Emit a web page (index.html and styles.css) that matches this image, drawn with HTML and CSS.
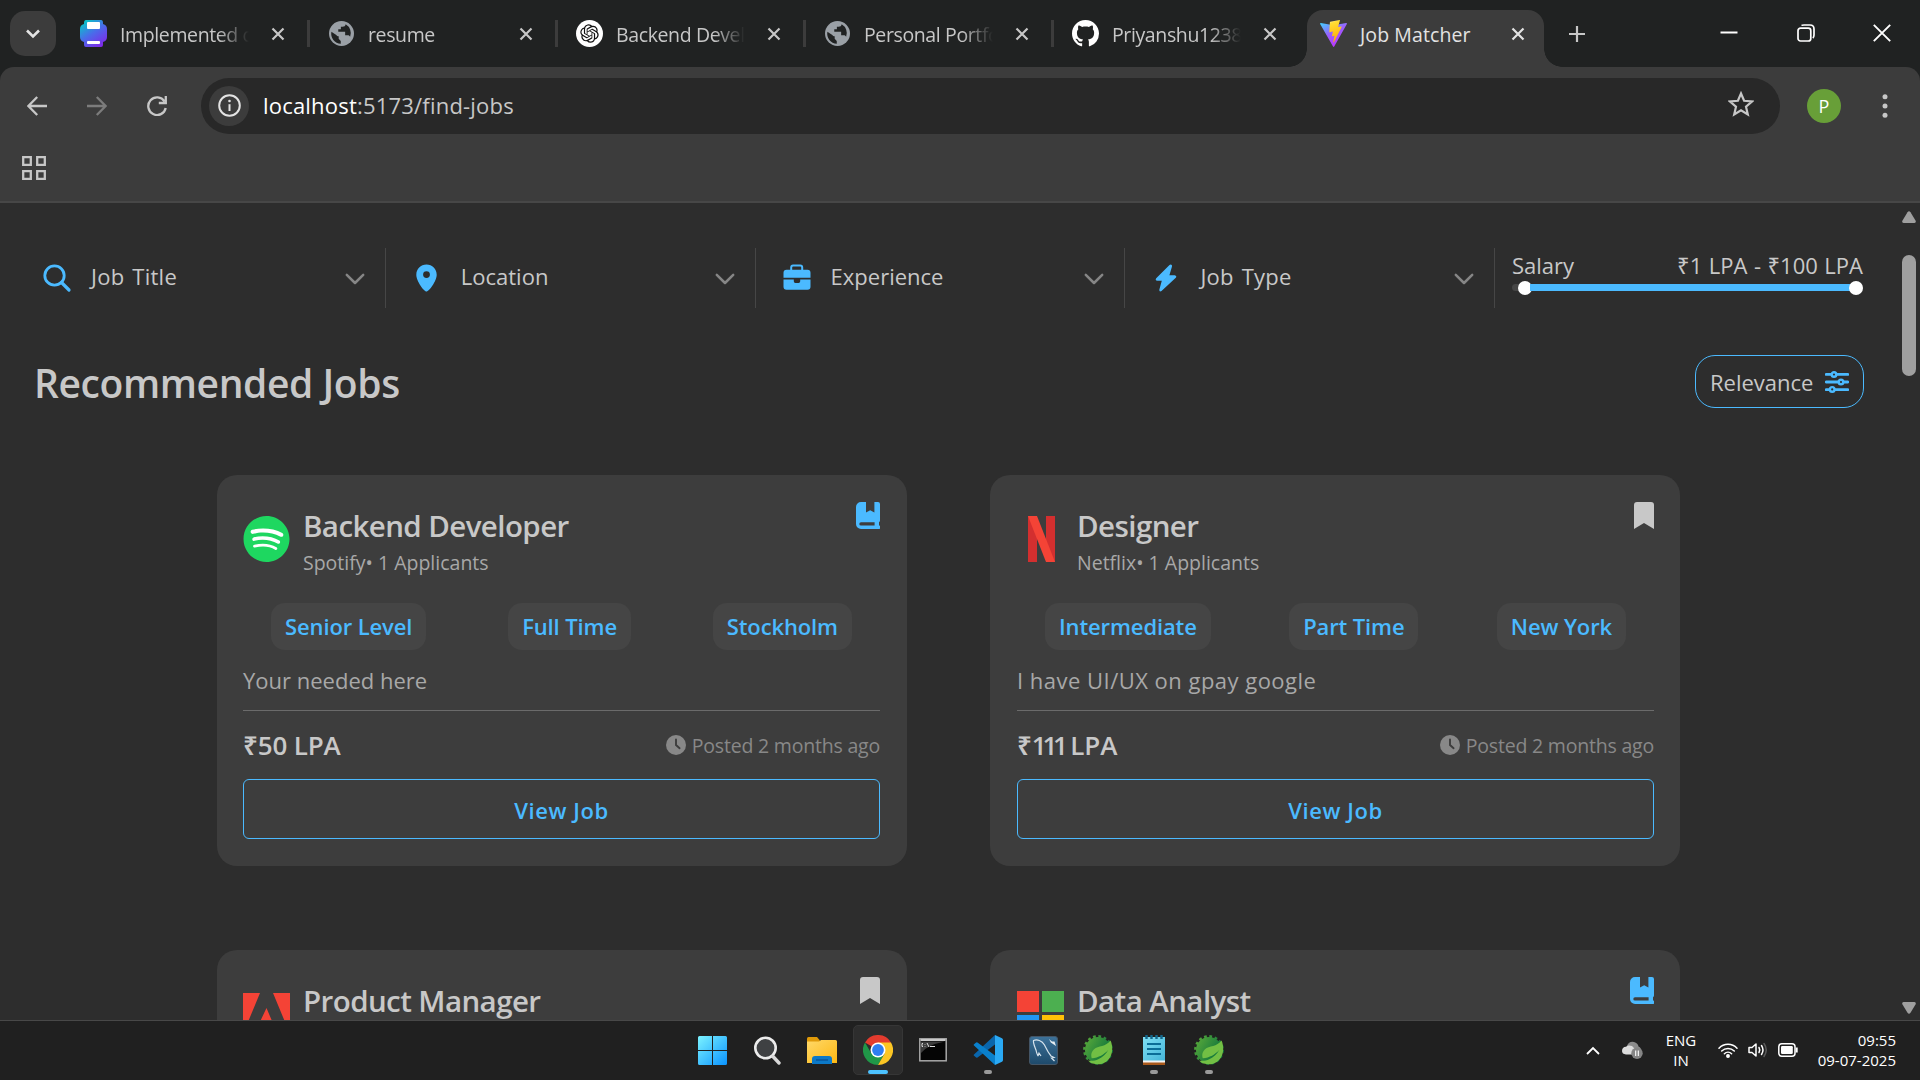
FILE: index.html
```html
<!DOCTYPE html>
<html lang="en">
<head>
<meta charset="utf-8">
<title>Job Matcher</title>
<link rel="stylesheet" href="styles.css">
</head>
<body>
<svg class="defs" width="0" height="0">
  <defs>
    <linearGradient id="g-vite" x1="0" y1="0" x2=".6" y2="1"><stop offset="0" stop-color="#41d1ff"/><stop offset=".5" stop-color="#9a60fe"/><stop offset="1" stop-color="#bd34fe"/></linearGradient>
    <linearGradient id="g-bolt" x1=".4" y1="0" x2=".6" y2="1"><stop offset="0" stop-color="#ffea83"/><stop offset=".1" stop-color="#ffdd35"/><stop offset="1" stop-color="#ffa800"/></linearGradient>
    <linearGradient id="g-bot" x1=".1" y1="0" x2=".8" y2="1"><stop offset="0" stop-color="#00d0c4"/><stop offset=".5" stop-color="#4a6bea"/><stop offset="1" stop-color="#8226e8"/></linearGradient>
    <linearGradient id="g-win" gradientUnits="userSpaceOnUse" x1="0" y1="0" x2="29" y2="29"><stop offset="0" stop-color="#7cf3ff"/><stop offset="1" stop-color="#0a93ff"/></linearGradient>
    <linearGradient id="g-folder" x1="0" y1="0" x2="1" y2="1"><stop offset="0" stop-color="#ffd868"/><stop offset="1" stop-color="#fdb813"/></linearGradient>
    <linearGradient id="g-gear" x1="0" y1="0" x2="1" y2=".6"><stop offset="0" stop-color="#5cab3a"/><stop offset="1" stop-color="#08703c"/></linearGradient>
    <linearGradient id="g-sql" x1="0" y1="0" x2="0" y2="1"><stop offset="0" stop-color="#3c7199"/><stop offset="1" stop-color="#1e4a6b"/></linearGradient>
    <linearGradient id="g-note" x1="0" y1="0" x2="1" y2="1"><stop offset="0" stop-color="#7fe0f5"/><stop offset="1" stop-color="#45b5d8"/></linearGradient>
    <symbol id="i-x" viewBox="0 0 14 14"><path d="M1.500 1.500l11 11M12.500 1.500l-11 11" fill="none" stroke="currentColor" stroke-width="2.200"/></symbol>
    <symbol id="i-globe" viewBox="0 0 24 24"><circle cx="12" cy="12" r="12" fill="#9aa0a6"/><path d="M2.300 10.300L7 13.500c.5.800 1.300 1.200 2.300 1.200v2.400l2 2v2.800A9.800 9.800 0 0 1 2.300 10.300zM16 3.200c-.2 1.600-1.300 2.400-3 2.400h-1.600v2.300H8.900v2.300h6.600v3.500h2.600c1 0 1.800.6 2.200 1.500A9.800 9.800 0 0 0 16 3.200z" fill="#202222"/></symbol>
    <symbol id="i-chev" viewBox="0 0 20 12"><path d="M1.800 1.800L10 10l8.200-8.200" fill="none" stroke="#868686" stroke-width="2.500" stroke-linecap="round" stroke-linejoin="round"/></symbol>
    <symbol id="i-mark" viewBox="0 0 20 27"><path d="M3 0h14a3 3 0 0 1 3 3v24l-10-6L0 27V3a3 3 0 0 1 3-3z" fill="#c8c8c8"/></symbol>
    <symbol id="i-book" viewBox="0 0 24 27"><path d="M5 0h5v10.500l4.200-2.300 4.200 2.300V0h3.600a2 2 0 0 1 2 2v16.500a2 2 0 0 1-1 1.700v3.400h.2a1.700 1.700 0 0 1 0 3.400H5a5 5 0 0 1-5-5V5a5 5 0 0 1 5-5zM5 20.200a1.700 1.700 0 0 0 0 3.400h13.600v-3.400z" fill="#4bbaff" fill-rule="evenodd"/></symbol>
    <symbol id="i-clock" viewBox="0 0 20 20"><circle cx="10" cy="10" r="10" fill="#888"/><path d="M10 4.500V10l3.600 3.200" fill="none" stroke="#3d3d3d" stroke-width="1.900" stroke-linecap="round"/></symbol>
    <symbol id="i-spring" viewBox="0 0 30 30"><circle cx="15" cy="15" r="13" fill="url(#g-gear)"/><circle cx="15" cy="15" r="13.600" fill="none" stroke="url(#g-gear)" stroke-width="2.600" stroke-dasharray="2.700 2.640"/><path d="M27.500 5.500c2.300 5 2.600 12-.8 17.500-4 6-11 7.500-17 5.500-2-.7-3.500-1.700-4.500-3 3.500.6 7 .1 10-1.300 4.500-2 8-5.200 10-9.200-4 4.500-9.500 7.800-16.500 8.200-1-3-.5-6.500 2.300-9C15 10.500 23 12 27.500 5.500z" fill="#72bf44"/></symbol>
  </defs>
</svg>

<header class="tabstrip">
  <button class="tab-search"><svg width="16" height="12" viewBox="0 0 16 12"><path d="M2 2.500l6 6 6-6" fill="none" stroke="#e3e3e3" stroke-width="2.600"/></svg></button>
  <div class="tab"><svg class="fav" viewBox="0 0 27 27"><path d="M6 0h15q2 0 2 3v1q4 1 4 5v8q0 4-4 5v3q0 2-2 2H6q-2 0-2-2v-3q-4-1-4-5V9q0-4 4-5V3q0-3 2-3z" fill="url(#g-bot)"/><rect x="7" y="2" width="13" height="7" rx="1" fill="#fff"/><rect x="7" y="21" width="13" height="3" rx="1" fill="#fff"/></svg><span class="tab-title">Implemented c</span><svg class="x"><use href="#i-x"/></svg></div>
  <div class="tab"><svg class="fav globe"><use href="#i-globe"/></svg><span class="tab-title">resume</span><svg class="x"><use href="#i-x"/></svg></div>
  <div class="tab"><svg class="fav" viewBox="0 0 27 27"><circle cx="13.500" cy="13.500" r="13.500" fill="#fff"/><path transform="translate(4.300 4.300) scale(.767)" fill="#111" d="M22.282 9.821a5.985 5.985 0 0 0-.516-4.910 6.046 6.046 0 0 0-6.510-2.900A6.065 6.065 0 0 0 4.981 4.182a5.985 5.985 0 0 0-3.998 2.900 6.046 6.046 0 0 0 .743 7.097 5.980 5.980 0 0 0 .511 4.911 6.051 6.051 0 0 0 6.515 2.900A5.985 5.985 0 0 0 13.260 24a6.056 6.056 0 0 0 5.772-4.206 5.989 5.989 0 0 0 3.998-2.900 6.056 6.056 0 0 0-.748-7.073zm-9.022 12.608a4.476 4.476 0 0 1-2.876-1.041l.142-.080 4.778-2.758a.795.795 0 0 0 .393-.681v-6.737l2.020 1.169a.071.071 0 0 1 .038.052v5.583a4.504 4.504 0 0 1-4.495 4.494zm-9.661-4.125a4.471 4.471 0 0 1-.535-3.014l.142.085 4.783 2.758a.771.771 0 0 0 .781 0l5.843-3.369v2.332a.080.080 0 0 1-.033.062L9.740 19.950a4.499 4.499 0 0 1-6.141-1.646zM2.341 7.896a4.485 4.485 0 0 1 2.366-1.973V11.600a.766.766 0 0 0 .388.677l5.814 3.354-2.020 1.169a.076.076 0 0 1-.071 0l-4.830-2.787A4.504 4.504 0 0 1 2.341 7.872zm16.596 3.856L13.104 8.364 15.119 7.200a.076.076 0 0 1 .071 0l4.830 2.791a4.494 4.494 0 0 1-.677 8.104v-5.677a.790.790 0 0 0-.407-.667zm2.011-3.023l-.142-.085-4.774-2.782a.776.776 0 0 0-.785 0L9.409 9.230V6.897a.066.066 0 0 1 .028-.062l4.830-2.787a4.499 4.499 0 0 1 6.680 4.660zM8.307 12.863l-2.020-1.164a.080.080 0 0 1-.038-.057V6.074a4.499 4.499 0 0 1 7.376-3.454l-.142.081L8.704 5.459a.795.795 0 0 0-.393.681zm1.098-2.365l2.602-1.500 2.607 1.500v2.999l-2.597 1.500-2.607-1.500Z"/></svg><span class="tab-title">Backend Devel</span><svg class="x"><use href="#i-x"/></svg></div>
  <div class="tab"><svg class="fav globe"><use href="#i-globe"/></svg><span class="tab-title">Personal Portfo</span><svg class="x"><use href="#i-x"/></svg></div>
  <div class="tab last"><svg class="fav" viewBox="0 0 16 16"><path fill="#fff" d="M8 0C3.580 0 0 3.580 0 8c0 3.540 2.290 6.530 5.470 7.590.4.070.55-.17.55-.38 0-.19-.01-.82-.01-1.490-2.010.37-2.530-.49-2.690-.94-.09-.23-.48-.94-.82-1.130-.28-.15-.68-.52-.01-.53.63-.01 1.080.58 1.230.82.72 1.210 1.870.87 2.330.66.07-.52.28-.87.51-1.070-1.780-.2-3.640-.89-3.640-3.950 0-.87.31-1.590.82-2.150-.08-.2-.36-1.020.08-2.120 0 0 .67-.21 2.200.82.640-.18 1.320-.27 2-.27s1.360.09 2 .27c1.530-1.040 2.200-.82 2.200-.82.440 1.100.160 1.920.080 2.120.510.560.820 1.270.820 2.150 0 3.070-1.870 3.750-3.650 3.950.290.250.540.730.540 1.480 0 1.070-.01 1.930-.01 2.200 0 .210.150.460.550.380A8.010 8.010 0 0 0 16 8c0-4.420-3.580-8-8-8z"/></svg><span class="tab-title">Priyanshu1238</span><svg class="x"><use href="#i-x"/></svg></div>
  <div class="tab active"><svg class="fav" viewBox="0 0 256 257"><path fill="url(#g-vite)" d="M255.153 37.938L134.897 252.976c-2.483 4.440-8.862 4.466-11.382.048L.875 37.958c-2.746-4.814 1.371-10.646 6.827-9.670l120.385 21.517a6.537 6.537 0 0 0 2.322-.004l117.867-21.483c5.438-.991 9.574 4.796 6.877 9.620Z"/><path fill="url(#g-bolt)" d="M185.432.063L96.440 17.501a3.268 3.268 0 0 0-2.634 3.014l-5.474 92.456a3.268 3.268 0 0 0 3.997 3.378l24.777-5.718c2.318-.535 4.413 1.507 3.936 3.838l-7.361 36.047c-.495 2.426 1.782 4.500 4.151 3.780l15.304-4.649c2.372-.720 4.652 1.360 4.150 3.788l-11.698 56.621c-.732 3.542 3.979 5.473 5.943 2.437l1.313-2.028l72.516-144.720c1.215-2.423-.880-5.186-3.540-4.672l-25.505 4.922c-2.396.462-4.435-1.770-3.759-4.114l16.646-57.705c.677-2.350-1.370-4.583-3.769-4.113Z"/></svg><span class="tab-title">Job Matcher</span><svg class="x"><use href="#i-x"/></svg></div>
  <svg class="plus" width="18" height="18" viewBox="0 0 18 18"><path d="M9 1v16M1 9h16" stroke="#c7c7c7" stroke-width="2.200"/></svg>
  <div class="win">
    <svg width="18" height="18" viewBox="0 0 18 18"><path d="M.5 8.500h17" stroke="#fff" stroke-width="2"/></svg>
    <svg width="18" height="18" viewBox="0 0 18 18" fill="none" stroke="#fff" stroke-width="1.700"><rect x="1" y="4.200" width="12.800" height="12.800" rx="2.500"/><path d="M4.500 1.500Q5 1 7 1h6q4 0 4 4v6q0 2-1.200 3"/></svg>
    <svg width="18" height="18" viewBox="0 0 18 18"><path d="M.8.8l16.400 16.400M17.200.8L.8 17.200" stroke="#fff" stroke-width="1.900"/></svg>
  </div>
</header>

<div class="chrome">
  <div class="toolbar">
    <svg class="nav" viewBox="0 0 20 20"><path d="M20 10H2M10.200 1L1.400 10l8.800 9" fill="none" stroke="#c7c7c7" stroke-width="2.300"/></svg>
    <svg class="nav" viewBox="0 0 20 20"><path d="M0 10h18M9.800 1l8.800 9-8.800 9" fill="none" stroke="#7c7c7c" stroke-width="2.300"/></svg>
    <svg class="nav" viewBox="0 0 20 20"><path d="M17.500 5.500A8.800 8.800 0 1 0 18.700 12M18.800 0v7h-7" fill="none" stroke="#c7c7c7" stroke-width="2.300"/></svg>
    <div class="omnibox">
      <span class="info"><svg width="23" height="23" viewBox="0 0 23 23"><circle cx="11.500" cy="11.500" r="10.300" fill="none" stroke="#e3e3e3" stroke-width="2"/><path d="M11.500 10.200V17" stroke="#e3e3e3" stroke-width="2"/><circle cx="11.500" cy="7" r="1.300" fill="#e3e3e3"/></svg></span>
      <span class="url"><b>localhost</b>:5173/find-jobs</span>
      <svg class="star" width="26" height="26" viewBox="0 0 26 26"><path d="M13 2.500l3.100 7.300 7.900.7-6 5.200 1.800 7.700-6.800-4.100-6.800 4.100L8 15.700l-6-5.200 7.900-.7z" fill="none" stroke="#c7c7c7" stroke-width="2.200"/></svg>
    </div>
    <span class="avatar">P</span>
    <svg class="dots" width="6" height="24" viewBox="0 0 6 24" fill="#c7c7c7"><circle cx="3" cy="2.700" r="2.500"/><circle cx="3" cy="12" r="2.500"/><circle cx="3" cy="21.300" r="2.500"/></svg>
  </div>
  <div class="bookmarks"><svg width="24" height="24" viewBox="0 0 24 24" fill="none" stroke="#c7c7c7" stroke-width="2.300"><path d="M1.200 1.200h7.600v7.600H1.200zM15.200 1.200h7.600v7.600h-7.600zM1.200 15.200h7.600v7.600H1.200zM15.200 15.200h7.600v7.600h-7.600z"/></svg></div>
</div>

<div class="viewport">
  <main class="page">
    <section class="filters">
      <div class="filter"><svg width="30" height="30" viewBox="0 0 30 30"><circle cx="12.500" cy="12.500" r="9.700" fill="none" stroke="#4bbaff" stroke-width="2.800"/><path d="M19.500 19.500l7.500 7.500" stroke="#4bbaff" stroke-width="3.200" stroke-linecap="round"/></svg><span class="spaced">Job Title</span><svg class="chev"><use href="#i-chev"/></svg></div>
      <div class="filter"><svg width="30" height="30" viewBox="0 0 30 30"><path d="M14.500 1.500c5.800 0 10.200 4.500 10.200 10.200 0 6.300-7.700 16.800-10.200 16.800S4.300 18 4.300 11.700C4.300 6 8.700 1.500 14.500 1.500zm0 6.700a3.400 3.400 0 1 0 0 6.800 3.400 3.400 0 0 0 0-6.800z" fill="#4bbaff" fill-rule="evenodd"/></svg><span>Location</span><svg class="chev"><use href="#i-chev"/></svg></div>
      <div class="filter"><svg width="30" height="30" viewBox="0 0 30 30"><path d="M9.200 7V4.500q0-1.900 1.900-1.900h7.200q1.900 0 1.900 1.900V7" fill="none" stroke="#4bbaff" stroke-width="2"/><path d="M4.500 6.700h21q3 0 3 3v5h-27v-5q0-3 3-3zM1.500 16.500h10.300v1.800q0 1.600 1.600 1.600h3.200q1.600 0 1.600-1.600v-1.800h10.300v7.200q0 3-3 3h-21q-3 0-3-3z" fill="#4bbaff"/></svg><span>Experience</span><svg class="chev"><use href="#i-chev"/></svg></div>
      <div class="filter"><svg width="30" height="30" viewBox="0 0 30 30"><path d="M19.600 1.500q1.800.1 1.400 2l-2.600 8.700h5.300q2.500.6 1.100 2.600L10.500 28q-2.300 1.200-2.200-1.200l2.500-9H6.300q-2.500-.6-1.100-2.600L18.500 2q.5-.5 1.100-.5z" fill="#4bbaff"/></svg><span class="spaced">Job Type</span><svg class="chev"><use href="#i-chev"/></svg></div>
      <div class="salary">
        <div class="salary-text"><span>Salary</span><span class="range">₹1 LPA - ₹100 LPA</span></div>
        <div class="track"><span class="thumb"></span><span class="bar"></span><span class="thumb"></span></div>
      </div>
    </section>
    <section class="heading">
      <h1>Recommended Jobs</h1>
      <button class="sort"><span>Relevance</span><svg width="24" height="22" viewBox="0 0 24 22" fill="#2d2d2d" stroke="#4bbaff" stroke-width="2.400"><path d="M1.200 3.300h21.600M1.200 11h21.600M1.200 18.600h21.600" stroke-width="2.800" stroke-linecap="round"/><circle cx="9" cy="3.500" r="2.300"/><circle cx="16" cy="11" r="2.300"/><circle cx="7.200" cy="18.400" r="2.300"/></svg></button>
    </section>
    <section class="cards">
      <article class="card">
        <div class="card-head">
          <svg class="logo" viewBox="0 0 24 24"><circle cx="12" cy="12" r="11" fill="#fff"/><path fill="#1ed760" d="M12 0C5.400 0 0 5.400 0 12s5.400 12 12 12 12-5.400 12-12S18.660 0 12 0zm5.521 17.340c-.240.359-.660.480-1.021.240-2.820-1.740-6.360-2.101-10.561-1.141-.418.122-.779-.179-.899-.539-.120-.421.180-.780.540-.900 4.560-1.021 8.520-.600 11.640 1.320.420.180.479.659.301 1.020zm1.440-3.300c-.301.420-.841.600-1.262.300-3.239-1.980-8.159-2.580-11.939-1.380-.479.120-1.020-.120-1.140-.600-.120-.480.120-1.021.600-1.141C9.600 9.900 15 10.561 18.720 12.840c.361.181.540.780.241 1.200zm.120-3.360C15.240 8.400 8.820 8.160 5.160 9.301c-.600.179-1.200-.181-1.380-.721-.180-.601.180-1.200.720-1.381 4.260-1.260 11.280-1.020 15.721 1.621.539.300.719 1.020.419 1.560-.299.421-1.020.599-1.559.300z"/></svg>
          <div class="who"><h2>Backend Developer</h2><p>Spotify• 1 Applicants</p></div>
          <svg class="book"><use href="#i-book"/></svg>
        </div>
        <div class="tags"><span>Senior Level</span><span>Full Time</span><span>Stockholm</span></div>
        <p class="desc">Your needed here</p>
        <div class="foot"><strong>₹50 LPA</strong><svg width="20" height="20"><use href="#i-clock"/></svg><span>Posted 2 months ago</span></div>
        <button class="view">View Job</button>
      </article>
      <article class="card">
        <div class="card-head">
          <svg class="logo" viewBox="0 0 47 46"><path d="M11 0h9v46h-9zM29 0h9v46h-9z" fill="#d32f2f"/><path d="M11 0h9l18 46h-9z" fill="#f44336"/></svg>
          <div class="who"><h2>Designer</h2><p>Netflix• 1 Applicants</p></div>
          <svg class="mark"><use href="#i-mark"/></svg>
        </div>
        <div class="tags"><span>Intermediate</span><span>Part Time</span><span>New York</span></div>
        <p class="desc loose">I have UI/UX on gpay google</p>
        <div class="foot"><strong>₹<span class="ones">111</span> LPA</strong><svg width="20" height="20"><use href="#i-clock"/></svg><span>Posted 2 months ago</span></div>
        <button class="view">View Job</button>
      </article>
      <article class="card">
        <div class="card-head">
          <svg class="logo" viewBox="0 0 47 46"><path d="M0 2h17L0 43zM30 2h17v41zM23.500 17l11 26H26l-3-8h-8z" fill="#f44336"/></svg>
          <div class="who"><h2>Product Manager</h2></div>
          <svg class="mark"><use href="#i-mark"/></svg>
        </div>
      </article>
      <article class="card">
        <div class="card-head">
          <svg class="logo" viewBox="0 0 47 46"><path d="M0-1h22v22H0z" fill="#f44336"/><path d="M25-1h22v22H25z" fill="#4caf50"/><path d="M0 24h22v22H0z" fill="#2196f3"/><path d="M25 24h22v22H25z" fill="#ffc107"/></svg>
          <div class="who"><h2>Data Analyst</h2></div>
          <svg class="book"><use href="#i-book"/></svg>
        </div>
      </article>
    </section>
  </main>
  <aside class="scrollbar">
    <svg width="14" height="12" viewBox="0 0 14 12"><path d="M5.500 1.200q1.500-2 3 0L13.500 9.500q1 2-1 2.500h-11q-2-.5-1-2.500z" fill="#9f9f9f"/></svg>
    <span class="scroll-thumb"></span>
    <svg width="14" height="12" viewBox="0 0 14 12"><path d="M5.500 10.800q1.500 2 3 0L13.500 2.500q1-2-1-2.500h-11q-2 .5-1 2.500z" fill="#9f9f9f"/></svg>
  </aside>
</div>

<footer class="taskbar">
  <div class="apps">
    <span class="app"><svg width="29" height="29" viewBox="0 0 29 29"><path d="M1.500 0H14v14H0V1.500Q0 0 1.500 0zM15 0h12.500Q29 0 29 1.500V14H15zM0 15h14v14H1.500Q0 29 0 27.500zM15 15h14v12.500q0 1.500-1.500 1.500H15z" fill="url(#g-win)"/></svg></span>
    <span class="app"><svg width="29" height="29" viewBox="0 0 29 29"><circle cx="12.500" cy="12" r="10.200" fill="#3f4143" stroke="#ececec" stroke-width="2.600"/><path d="M20 20.500l6 6.500" stroke="#d8d8d8" stroke-width="3.400" stroke-linecap="round"/></svg></span>
    <span class="app"><svg width="30" height="28" viewBox="0 0 30 28"><path d="M0 2.500Q0 1 1.500 1H10l3 3.500V8H0z" fill="#e09a09"/><path d="M0 5.500h12l2-1.500h14.500Q30 4 30 5.500V27H0z" fill="url(#g-folder)"/><path d="M5 28v-5q0-3 3-3h14q3 0 3 3v5z" fill="#0c79c8"/><path d="M9 24h12" stroke="#08549a" stroke-width="1.400"/></svg></span>
    <span class="app current"><svg width="30" height="30" viewBox="0 0 30 30"><path d="M15 15L2 7.500A15 15 0 0 1 28 7.500z" fill="#e33b2e"/><path d="M15 15l-6.500 3.700L2 7.500A15 15 0 0 0 15 30l6.500-11.300z" fill="#209748"/><path d="M15 7.500h13A15 15 0 0 1 15 30l6.500-11.300z" fill="#fcc624"/><circle cx="15" cy="15" r="7.500" fill="#fff"/><circle cx="15" cy="15" r="5.900" fill="#2f7ef2"/></svg></span>
    <span class="app"><svg width="28" height="24" viewBox="0 0 28 24"><rect x=".8" y=".8" width="26.400" height="22" fill="#050505" stroke="#a8a8a8" stroke-width="1.500"/><path d="M1.500 2.500h25M1.500 1.500h25" stroke="#c9c9c9"/><path d="M2 3.500h24Q8 7 2 15z" fill="#3c3c3c"/><path d="M4 5.500H3v3h1M6 6v.6M6 8v.6M8 5l2 4M11 8.500h5" stroke="#ddd" fill="none"/></svg></span>
    <span class="app run"><svg width="30" height="30" viewBox="0 0 30 30"><path d="M1 19.500L22 0v9.500L4.500 22.500q-1 .5-1.700-.2L.8 20.500q-.5-.5.200-1z" fill="#0a66ac"/><path d="M1 10.500L22 30v-9.500L4.500 7.500q-1-.5-1.700.2L.8 9.500q-.5.500.200 1z" fill="#0a80cc"/><path d="M22 0l7 3.300q1 .5 1 1.700v20q0 1.200-1 1.700L22 30z" fill="#2aa9f4"/></svg></span>
    <span class="app"><svg width="29" height="29" viewBox="0 0 29 29"><rect x=".5" y=".5" width="28" height="28" rx="2.500" fill="url(#g-sql)" stroke="#456"/><path d="M9 20c-1-2-1.500-3-2-6C5.500 10 4 7 4.500 4.500 8 3 13 4.500 15.500 9c2 4 3 7 6.500 11l3 1.500-2.500.5 3 3M9 20l1-3 2 3" fill="none" stroke="#d6e3ec" stroke-width="1.200"/><path d="M20 3l1.800 3.500L27 10l-1.500-4.500-2.500 0z" fill="#e8eef2"/></svg></span>
    <span class="app"><svg width="30" height="30"><use href="#i-spring"/></svg></span>
    <span class="app run"><svg width="22" height="30" viewBox="0 0 22 30"><path d="M0 25h22v5H0z" fill="#a9591b"/><path d="M0 24h22v3.500H0z" fill="#f3f3f3"/><path d="M0 2h22v23.500H0z" fill="url(#g-note)"/><path d="M4 9h14M4 14h14M4 19h14" stroke="#0b6d97" stroke-width="2"/><path d="M3.500 0v4M8.500 0v4M13.500 0v4M18.500 0v4" stroke="#14688c" stroke-width="2.400"/></svg></span>
    <span class="app run"><svg width="30" height="30"><use href="#i-spring"/></svg></span>
  </div>
  <div class="tray">
    <svg width="14" height="9" viewBox="0 0 14 9"><path d="M1 8l6-6 6 6" fill="none" stroke="#fff" stroke-width="1.800"/></svg>
    <svg class="cloud" width="21" height="18" viewBox="0 0 21 18"><path d="M5 5Q7 0 12 1q4 1 4.500 4.500 3 1 2.500 5H6z" fill="#8c8c8c"/><path d="M4 13.500Q0 13 0 10q0-4 4-4.200Q6 3.500 10 5l3 3v5.500z" fill="#dcdcdc"/><circle cx="15" cy="12.300" r="5.700" fill="#858585"/><path d="M13.700 9.500v5.600M16.300 9.500v5.600" stroke="#fff" stroke-width="1.100"/></svg>
    <span class="lang"><span>ENG</span><span>IN</span></span>
    <svg width="20" height="16" viewBox="0 0 20 16" fill="none" stroke="#fff" stroke-width="1.500" stroke-linecap="round"><path d="M1 6.200a12.500 12.500 0 0 1 18 0M3.700 9a8.900 8.900 0 0 1 12.600 0M6.400 11.700a5.200 5.200 0 0 1 7.200 0"/><circle cx="10" cy="14" r="1.200" fill="#fff"/></svg>
    <svg class="vol" width="20" height="16" viewBox="0 0 20 16" fill="none" stroke="#fff" stroke-width="1.500" stroke-linecap="round"><path d="M1 5.500h3L8 2v12l-4-3.500H1z" stroke-linejoin="round"/><path d="M11 5.500q1.500 2.500 0 5M13.500 3.500q3 4.500 0 9"/><path d="M16 1.500q4.500 6.500 0 13" stroke="#5a5a5a"/></svg>
    <svg width="20" height="14" viewBox="0 0 20 14"><rect x=".8" y=".8" width="16.200" height="12.400" rx="3" fill="none" stroke="#fff" stroke-width="1.500"/><rect x="3" y="3" width="11.800" height="8" rx="1.200" fill="#fff"/><path d="M18.700 4.500v5" stroke="#fff" stroke-width="2"/></svg>
    <span class="clock"><span>09:55</span><span>09-07-2025</span></span>
  </div>
</footer>
</body>
</html>
```
FILE: styles.css
```css
* { box-sizing: border-box; }
body { margin: 0; width: 1920px; height: 1080px; overflow: hidden; display: flex; flex-direction: column; background: #202222; color: #c8c8c8; font-family: "Open Sans", "Noto Sans", sans-serif; }
h1, h2, p { margin: 0; }
button { font: inherit; color: inherit; background: none; border: 0; padding: 0; }
svg { flex: none; display: block; }
.defs { position: absolute; }

/* tab strip */
.tabstrip { height: 67px; background: #202222; display: flex; align-items: flex-start; flex: none; }
.tab-search { width: 46px; height: 45px; margin: 11px 6px 0 10px; border-radius: 15px; background: #3c3c3c; display: flex; align-items: center; justify-content: center; }
.tab { width: 248px; height: 27px; margin-top: 20px; padding-left: 18px; display: flex; align-items: center; border-right: 3px solid #3c3c3c; color: #c7c7c7; }
.tab.last { border-right-color: transparent; }
.fav { width: 27px; height: 27px; }
.globe { width: 25px; height: 25px; margin: 0 1px; }
.tab-title { width: 131px; margin: 2px 0 0 13px; white-space: nowrap; font-size: 19.500px; line-height: 30px; letter-spacing: -.38px; mask-image: linear-gradient(90deg, #000 98px, transparent 129px); }
.x { width: 14px; height: 14px; margin-left: 20px; }
.tab.active { width: 237px; height: 57px; margin: 10px 33px 0 5px; padding: 0 0 10px 13px; border: 0; border-radius: 16px 16px 0 0; background: #3c3c3c; position: relative; color: #e3e3e3; }
.active .tab-title { letter-spacing: .1px; mask-image: none; }
.active::before, .active::after { content: ""; position: absolute; bottom: 0; width: 18px; height: 18px; }
.active::before { left: -18px; background: radial-gradient(circle at 0 0, transparent 17.5px, #3c3c3c 18px); }
.active::after { right: -18px; background: radial-gradient(circle at 100% 0, transparent 17.5px, #3c3c3c 18px); }
.plus { margin-left: -9px; margin-top: 25px; }
.win { margin: 24px 29px 0 auto; display: flex; gap: 58.500px; }

/* toolbar */
.chrome { height: 136px; background: #3c3c3c; border-bottom: 2px solid #474747; border-radius: 14px 14px 0 0; flex: none; }
.toolbar { height: 76px; display: flex; align-items: center; padding: 1px 0 0 27px; }
.nav { width: 20px; height: 20px; margin-right: 40.500px; }
.nav:first-child { margin-right: 39.500px; }
.omnibox { width: 1579px; height: 56px; margin-left: -6.500px; border-radius: 28px; background: #282828; display: flex; align-items: center; padding: 0 26px 0 8px; }
.info { width: 40px; height: 40px; border-radius: 50%; background: #3c3c3c; display: flex; align-items: center; justify-content: center; }
.url { margin: -1px 0 0 14px; flex: 1; color: #c7c7c7; font-size: 22px; letter-spacing: .2px; }
.url b { font-weight: 400; color: #fff; }
.star { margin-top: -3px; }
.avatar { width: 34px; height: 34px; margin-left: 27px; border-radius: 50%; background: #689f38; color: #fff; font-size: 18px; line-height: 34px; text-align: center; }
.dots { margin-left: 41px; }
.bookmarks { padding: 13px 22px; }

/* page */
.viewport { flex: 1; display: flex; min-height: 0; background: #2d2d2d; }
.page { flex: 1; overflow: hidden; height: 817px; padding: 45px 0 0 16px; }
.filters { display: flex; height: 60px; font-size: 22px; }
.filter { width: 369.800px; border-right: 1px solid #464646; display: flex; align-items: center; padding: 0 20px 0 26px; }
.filter span { margin: -4px 0 0 19px; flex: 1; line-height: 30px; }
.filter .spaced { letter-spacing: .25px; word-spacing: 2px; }
.chev { width: 20px; height: 12px; margin-top: 2px; }
.salary { width: 351px; margin-left: 16.800px; padding-top: 2px; }
.salary-text { display: flex; justify-content: space-between; line-height: 30px; height: 34px; }
.range { word-spacing: .8px; }
.track { height: 7px; border-radius: 4px; background: #454545; padding-left: 6px; display: flex; align-items: center; }
.thumb { width: 14px; height: 14px; border-radius: 50%; background: #fff; flex: none; }
.bar { flex: 1; height: 7px; background: #4bbaff; margin: 0 -2px; }
.heading { display: flex; justify-content: space-between; align-items: flex-start; height: 167px; padding: 47px 38px 0 18px; }
h1 { font-size: 39px; font-weight: 600; line-height: 56px; letter-spacing: -.4px; }
.sort { width: 169px; height: 53px; border: 1px solid #4bbaff; border-radius: 20px; display: flex; align-items: center; justify-content: space-between; padding: 0 14px; font-size: 22px; }
.cards { display: grid; grid-template-columns: 690px 690px; grid-auto-rows: 391px; gap: 84px 83px; padding-left: 201px; }
.card { background: #3d3d3d; border-radius: 20px; padding: 26px 27px 0 26px; }
.card:nth-child(even) { padding: 26px 26px 0 27px; }
.card-head { height: 76px; display: flex; }
.logo { width: 47px; height: 46px; margin: 15px 13px 0 0; }
.who { flex: 1; padding-top: 7px; }
h2 { font-size: 29.500px; font-weight: 600; line-height: 36px; letter-spacing: -.58px; white-space: nowrap; }
.who p { font-size: 19.500px; line-height: 26px; margin-top: 6px; color: #a8a8a8; }
.book { width: 24px; height: 27px; margin-top: 1px; }
.mark { width: 20px; height: 27px; margin-top: 1px; }
.tags { display: flex; justify-content: space-between; margin-top: 26px; padding: 0 28px; }
.tags span { height: 47px; padding: 0 14px; line-height: 46px; border-radius: 14px; background: #454545; white-space: nowrap; font-size: 22px; font-weight: 600; letter-spacing: -.12px; color: #4bbaff; }
.desc { margin: 15px 0; height: 30px; color: #a8a8a8; font-size: 22px; line-height: 30px; }
.loose { letter-spacing: .48px; }
.foot { border-top: 1px solid #6b6b6b; padding-top: 19px; height: 50px; display: flex; align-items: center; }
.foot strong { flex: 1; font-size: 26px; font-weight: 600; line-height: 30px; letter-spacing: -.15px; }
.ones { letter-spacing: -4.200px; }
.foot svg { margin-right: 6px; }
.foot > span { margin-top: 1px; font-size: 19.500px; letter-spacing: -.2px; color: #888; line-height: 30px; }
.view { display: block; width: 100%; height: 60px; margin-top: 19px; border: 1px solid #4bbaff; border-radius: 6px; padding-top: 2px; font-size: 22px; font-weight: 600; letter-spacing: .6px; color: #4bbaff; }
.scrollbar { width: 18px; display: flex; flex-direction: column; padding: 8px 0 6px; }
.scroll-thumb { width: 14px; height: 121px; border-radius: 7px; background: #9f9f9f; margin: 32px 0 auto; }

/* taskbar */
.taskbar { height: 60px; flex: none; background: #202020; border-top: 1px solid #484848; display: flex; justify-content: space-between; padding: 4px 24px 0 687px; }
.apps { display: flex; gap: 5.200px; }
.app { width: 50px; height: 50px; display: flex; align-items: center; justify-content: center; position: relative; border-radius: 5px; border: 1px solid transparent; }
.current { background: #2d2d2d; border-color: #363636; }
.current::after, .run::after { content: ""; position: absolute; bottom: 0; left: 20px; width: 8px; height: 4px; border-radius: 2px; background: #9a9a9a; }
.current::after { left: 14px; width: 20px; background: #4cc2ff; }
.tray { display: flex; align-items: center; height: 50px; font-size: 15px; color: #fff; }
.cloud { margin-left: 22px; }
.lang, .clock { display: flex; flex-direction: column; align-items: center; line-height: 20px; }
.lang { width: 30px; margin: 0 22px 0 23px; }
.clock { width: 80px; align-items: flex-end; margin-left: 18px; }
.vol { margin: 0 10px; }
```
